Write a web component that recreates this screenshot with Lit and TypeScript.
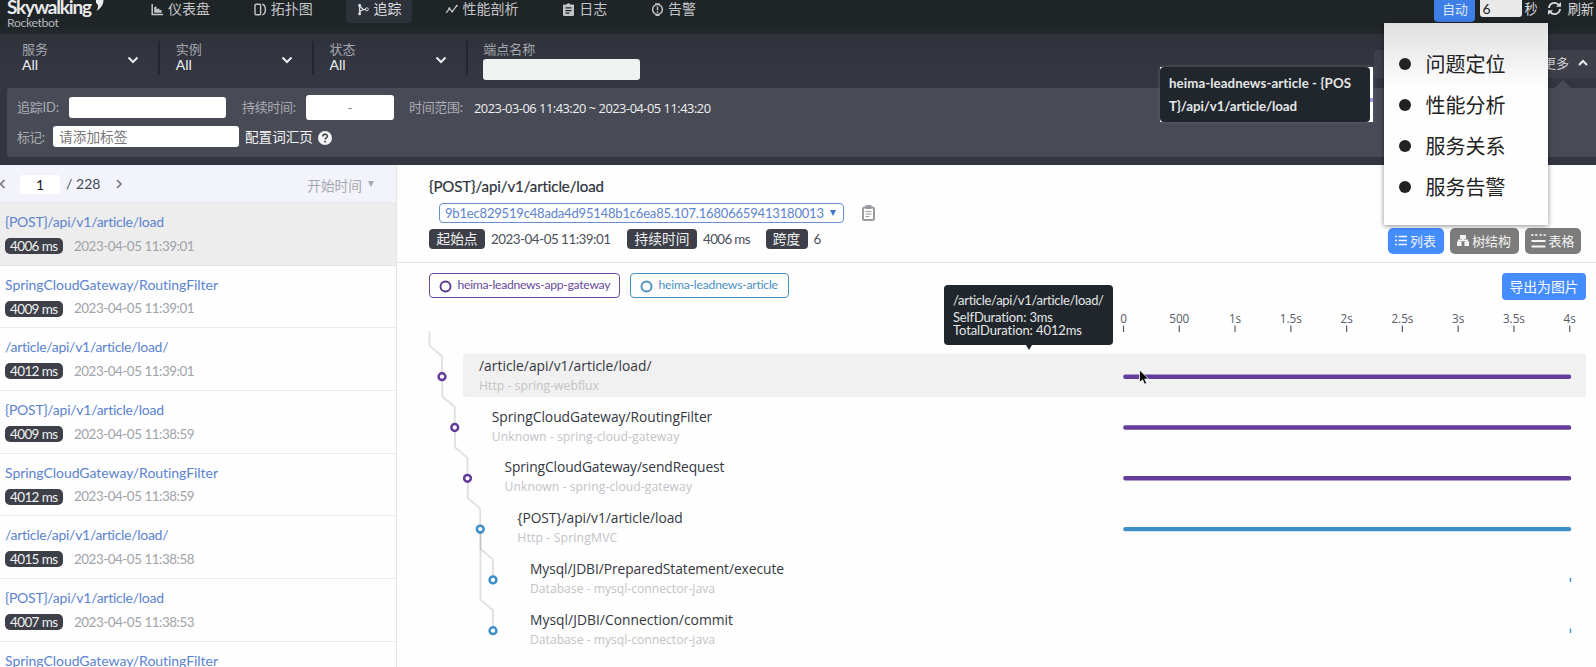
import { LitElement, html, svg, css } from "lit";
import { customElement, property } from "lit/decorators.js";

/** A single line of text that is tracked in or out so that it fills the given width. */
@customElement("fit-text")
class FitText extends LitElement {
  @property() text = "";
  @property({ type: Number }) width = 0;
  static styles = css`
    :host { display: inline-block; white-space: pre; font-variant-ligatures: none; flex: none; }
  `;
  render() {
    return html`<span>${this.text}</span>`;
  }
  updated() {
    const span = this.renderRoot.querySelector("span")!;
    span.style.letterSpacing = "0";
    const natural = span.getBoundingClientRect().width;
    span.style.letterSpacing = (this.width - natural) / Math.max(1, this.text.length - 1) + "px";
    this.style.width = this.width + "px";
  }
}

const fit = (text: string, width: number) => html`<fit-text .text=${text} .width=${width}></fit-text>`;

const navIcons = {
  dashboard: svg`<path d="M1.2 1v10.6H12" fill="none" stroke="currentColor" stroke-width="1.5"/><path d="M3.2 9.8V4.2l2.2-1 .3 3.3 2.2-1.2.9 2 1.8-.6v3.1z" fill="currentColor"/>`,
  topology: svg`<rect x="1" y="1.2" width="5.6" height="10.6" rx="1" fill="none" stroke="currentColor" stroke-width="1.4"/><path d="M8.2 1.2c2.600.5 3.200 2 3.200 5.300s-.6 4.800-3.200 5.300" fill="none" stroke="currentColor" stroke-width="1.4"/>`,
  trace: svg`<path d="M2.600 2.500v8M2.800 9.500c.6-3 3-3.200 6.200-3.200M3 3.500l3 2.500" fill="none" stroke="currentColor" stroke-width="1.300"/><circle cx="2.600" cy="2.200" r="1.500" fill="currentColor"/><circle cx="2.600" cy="10.800" r="1.500" fill="currentColor"/><circle cx="9.800" cy="6.300" r="1.500" fill="none" stroke="currentColor"/>`,
  profile: svg`<path d="M1.200 9.800l3.200-4.200 2.800 3 4.600-6" fill="none" stroke="currentColor" stroke-width="1.300"/><circle cx="4.400" cy="5.300" r="1" fill="currentColor"/><circle cx="7.300" cy="8.500" r="1" fill="currentColor"/><circle cx="11.800" cy="2.800" r="1" fill="currentColor"/>`,
  log: svg`<path fill-rule="evenodd" d="M2 1.500h2.700a1.900 1.900 0 0 1 3.600 0H11a1 1 0 0 1 1 1V12a1 1 0 0 1-1 1H2a1 1 0 0 1-1-1V2.500a1 1 0 0 1 1-1zM3.500 4.300v1.300h6V4.300zM3.500 6.900v1.300h6V6.900zM3.500 9.500v1.300h4V9.500z" fill="currentColor"/>`,
  alarm: svg`<circle cx="6.500" cy="6.500" r="4.900" fill="none" stroke="currentColor" stroke-width="1.400"/><path d="M6.500 3.500v3.700M6.500 8.300v1.400M4 1l5 0M4.500 12.200h4" stroke="currentColor" stroke-width="1.400" fill="none"/>`,
};
const nav = [
  { icon: navIcons.dashboard, label: "仪表盘" },
  { icon: navIcons.topology, label: "拓扑图" },
  { icon: navIcons.trace, label: "追踪", active: true },
  { icon: navIcons.profile, label: "性能剖析" },
  { icon: navIcons.log, label: "日志" },
  { icon: navIcons.alarm, label: "告警" },
];

const POST = "{POST}/api/v1/article/load";
const ROUTE = "SpringCloudGateway/RoutingFilter";
const ARTICLE = "/article/api/v1/article/load/";
const nameWidth: Record<string, number> = { [POST]: 159, [ROUTE]: 213, [ARTICLE]: 163.500 };
const traces = [
  [POST, "4006 ms", "2023-04-05 11:39:01"],
  [ROUTE, "4009 ms", "2023-04-05 11:39:01"],
  [ARTICLE, "4012 ms", "2023-04-05 11:39:01"],
  [POST, "4009 ms", "2023-04-05 11:38:59"],
  [ROUTE, "4012 ms", "2023-04-05 11:38:59"],
  [ARTICLE, "4015 ms", "2023-04-05 11:38:58"],
  [POST, "4007 ms", "2023-04-05 11:38:53"],
  [ROUTE, "4012 ms", "2023-04-05 11:38:53"],
];

const PURPLE = "#643c9c";
const BLUE = "#3f8fcb";
const spans = [
  { name: ARTICLE, w: 172.500, sub: "Http - spring-webflux", sw: 120, depth: 0, parent: -1, color: PURPLE, full: true },
  { name: ROUTE, w: 220.500, sub: "Unknown - spring-cloud-gateway", sw: 187.500, depth: 1, parent: 0, color: PURPLE, full: true },
  { name: "SpringCloudGateway/sendRequest", w: 220, sub: "Unknown - spring-cloud-gateway", sw: 187.500, depth: 2, parent: 1, color: PURPLE, full: true },
  { name: POST, w: 165.500, sub: "Http - SpringMVC", sw: 100, depth: 3, parent: 2, color: BLUE, full: true },
  { name: "Mysql/JDBI/PreparedStatement/execute", w: 254, sub: "Database - mysql-connector-java", sw: 185, depth: 4, parent: 3, color: BLUE, full: false },
  { name: "Mysql/JDBI/Connection/commit", w: 203, sub: "Database - mysql-connector-java", sw: 185, depth: 4, parent: 3, color: BLUE, full: false },
];
const axis = ["0", "500", "1s", "1.5s", "2s", "2.5s", "3s", "3.5s", "4s"];

@customElement("app-root")
class AppRoot extends LitElement {
  static styles = css`
    * { box-sizing: border-box; }
    :host {
      display: flex; flex-direction: column; position: relative; width: 1596px; height: 667px; overflow: hidden;
      background: #fefefe; font: 13px/18px Lato, "Noto Sans CJK SC", sans-serif; color: #4a505a;
    }
    svg { display: block; flex: none; }
    .header { height: 34px; flex: none; display: flex; background: linear-gradient(#1f2427 0 26px, #24282d 34px); color: #c3c5c8; }
    .brand { width: 140px; flex: none; padding-left: 7px; display: flex; flex-direction: column; }
    .logo { display: flex; height: 17px; gap: 2px; color: #e9eaec; }
    .logo fit-text { font-weight: 700; font-size: 19px; line-height: 24px; margin-top: -5px; }
    .bot { font-size: 12.300px; line-height: 14px; margin-top: -1px; color: #b2b5b9; }
    .nav { display: flex; gap: 22.800px; }
    .tab { display: flex; align-items: center; height: 23px; padding: 0 10px 5px 11px; gap: 4px; font-size: 14px; border-radius: 0 0 4px 4px; }
    .tab.on { background: #2d313a; color: #dadcdf; }
    .tools { margin-left: auto; padding-right: 2px; display: flex; align-items: flex-start; color: #d9dadc; font-size: 13.200px; line-height: 18px; }
    .auto { width: 41px; height: 22px; background: #3d7fe6; border-radius: 0 0 4px 4px; text-align: center; color: #dfe9f9; font-size: 12.800px; line-height: 19px; }
    .secs { width: 42px; height: 17px; margin: 0 2px 0 5px; background: #e9e9e9; border-radius: 0 0 3px 3px; padding-left: 2px; color: #222; line-height: 17px; font-size: 14px; }
    .sync { margin: 1px 6px 0 9px; }
    .filters { height: 54px; flex: none; display: flex; background: linear-gradient(#2f323b, #333640 30px); padding: 7px 0 0 22px; }
    .pick { width: 138.400px; height: 34px; margin-right: 15.400px; display: flex; justify-content: space-between; align-items: center; border-right: 2px solid #23262e; padding-right: 19px; }
    .pick > div { margin-top: -3px; }
    .pick > svg { margin-top: 3px; }
    .pick .k, .endpoint .k { color: #a4a7ae; font-size: 13px; line-height: 16px; }
    .pick .v { color: #eeeff1; font-size: 14px; line-height: 16px; }
    .endpoint .k { line-height: 17px; }
    .field { background: #fff; border-radius: 3px; height: 21px; }
    .endpoint .field { width: 157px; background: #f1f3f2; margin-top: 1px; }
    .more { margin-left: auto; margin-top: 9px; width: 222px; height: 28px; background: #3d4049; border-radius: 4px 0 0 4px; display: flex; align-items: center; justify-content: flex-end; gap: 8px; padding: 0 7px 2px 0; color: #cfd0d4; }
    .cond { height: 77px; flex: none; background: #333640; padding-left: 7px; }
    .box { height: 69px; background: #484b56; border-radius: 3px 0 0 3px; padding: 6px 0 0 10px; }
    .line { display: flex; align-items: center; color: #aaacb3; }
    .line1 { height: 26px; }
    .line2 { height: 21px; margin-top: 6px; }
    .id-field { width: 157px; margin: 0 16px 0 10px; }
    .dur-field { width: 88px; height: 25px; margin: 0 15px 0 10px; text-align: center; line-height: 27px; color: #888; }
    .tag-field { width: 186px; margin: 0 6px 0 8px; padding-left: 6px; line-height: 22px; font-size: 13.700px; color: #777; }
    .vocab { color: #f3f3f4; font-size: 13.600px; }
    .help { margin: 3px 0 0 5px; }
    .range { font: 12.800px/18px "Open Sans", sans-serif; color: #f0f0f1; margin-left: 11px; padding-top: 1px; }
    .body { flex: 1; min-height: 0; display: flex; }
    .side { width: 397px; flex: none; border-right: 1px solid #e4e5e9; overflow: hidden; }
    .pager { height: 38px; background: #f3f4fb; display: flex; align-items: center; border-bottom: 1px solid #e9eaee; color: #444b56; font-size: 14px; padding-top: 1px; }
    .page { width: 40px; height: 19px; background: #fff; border-radius: 3px; text-align: center; line-height: 20px; color: #222; margin: 0 6px 0 15px; }
    .next { margin-left: 15px; }
    .sort { margin-left: auto; color: #a6a9b0; font-size: 13.700px; display: flex; align-items: center; padding-right: 22px; gap: 6px; margin-top: 4px; }
    .tri { border: 3.500px solid transparent; border-top: 6px solid currentColor; border-bottom: 0; width: 0; margin-top: -4px; }
    .trace { height: 62.700px; border-bottom: 1.500px solid #ececee; padding: 10px 0 0 5px; }
    .trace.on { background: #ededed; border-bottom-color: #e4e4e4; }
    .name { font-size: 14px; line-height: 18px; height: 18px; color: #5b83cf; }
    .meta { display: flex; align-items: center; height: 18px; margin-top: 6px; gap: 11px; color: #a0a3a9; }
    .badge { width: 58px; height: 16px; border-radius: 5px; background: #3d4048; color: #f1f1f1; display: flex; align-items: center; justify-content: center; font-size: 13.500px; line-height: 16px; }
    .meta > fit-text { font-size: 13.400px; line-height: 17px; }
    .main { flex: 1; min-width: 0; display: flex; flex-direction: column; }
    .head { height: 98px; flex: none; border-bottom: 1.500px solid #e4e5e8; padding: 11px 16px 0 32px; }
    .title { font-size: 15px; line-height: 20px; height: 20px; color: #2d323b; -webkit-text-stroke: .2px currentColor; }
    .idrow { display: flex; align-items: center; gap: 18px; margin: 7px 0 0 10px; }
    .id { width: 405px; height: 19.500px; border: 1px solid #6a8fd0; border-radius: 4px; display: flex; align-items: center; padding: 0 5px; gap: 6px; color: #5b83cf; font-size: 13px; }
    .id .tri { margin-top: 0; color: #4474c4; }
    .facts { display: flex; align-items: center; height: 26px; margin-top: 3px; font-size: 13.400px; }
    .tag { height: 20px; background: #3d4048; border-radius: 4px; color: #f1f1f1; text-align: center; line-height: 20px; font-size: 13.700px; margin-right: 6px; }
    .tag.start { width: 56px; }
    .tag.dur { width: 70px; margin-left: 16px; }
    .tag.count { width: 42px; margin-left: 15px; }
    .views { margin-left: auto; display: flex; gap: 6px; padding-top: 4px; margin-right: -.5px; }
    .view { height: 26px; background: #7c7c7c; border-radius: 5px; color: #f4f4f4; display: flex; align-items: center; justify-content: center; gap: 3px; font-size: 12.900px; width: 56px; }
    .view.wide { width: 69px; }
    .view.on { background: #448dfe; }
    .legend { display: flex; height: 36px; flex: none; padding: 10px 10px 0 32px; gap: 10px; align-items: flex-start; }
    .svc { height: 24.500px; border: 1.300px solid; border-radius: 4px; display: flex; align-items: center; gap: 6px; padding-left: 8.500px; font-size: 12.200px; }
    .svc svg { margin-top: 3px; }
    .purple { color: #6a4a9c; width: 191px; }
    .blue { color: #4a90c2; width: 159px; }
    .export { margin-left: auto; width: 84px; height: 27px; background: #448dfe; border-radius: 4px; color: #fff; font-size: 13.800px; line-height: 27px; text-align: center; }
    .tree text { font-family: "Open Sans", "Noto Sans", sans-serif; font-variant-ligatures: none; }
    .t1 { font-size: 13.800px; fill: #33373f; }
    .t2 { font-size: 12.200px; fill: #c2c3c6; }
    .ax { font-size: 11.700px; fill: #555b66; text-anchor: middle; }
    .tip { position: absolute; background: #20262b; color: #e4e6e8; border-radius: 4px; }
    .tip1 { left: 1160px; top: 67px; width: 210px; height: 55px; padding: 5px 0 0 9px; font-weight: 700; font-size: 13.300px; line-height: 23.300px; display: flex; flex-direction: column; }
    .tipback { position: absolute; left: 1160px; top: 67px; width: 213px; height: 55px; background: linear-gradient(#fff 0 31px, #a99ad8 31px 35px, #fff 35px); box-shadow: 0 0 4px #5d6069; }
    .tip2 { left: 944px; top: 285px; width: 169px; height: 60px; padding: 7px 0 0 9px; font-size: 13px; line-height: 13px; display: flex; flex-direction: column; }
    .tip2 .path { line-height: 16px; margin-bottom: 3px; }
    .tip2::after { content: ""; position: absolute; left: 82px; top: 60px; border: 3px solid transparent; border-top: 5px solid #20262b; border-bottom: 0; }
    .menu { position: absolute; left: 1384px; top: 23px; width: 163.500px; height: 202px; background: linear-gradient(#e0e0e0, #fefefe 66px); box-shadow: 0 1px 5px rgba(0,0,0,.45); padding: 20.500px 0 0 15px; color: #222; font-size: 20px; }
    .entry { display: flex; align-items: center; gap: 14.500px; height: 40.900px; }
    .dot { width: 12px; height: 12px; border-radius: 50%; background: #222; }
    .notch { position: absolute; left: 1555px; top: 80px; border: 8px solid transparent; border-bottom: 8px solid #484b56; border-top: 0; }
    .cursor { position: absolute; left: 1138px; top: 369px; }
  `;

  private caret(up = false) {
    return html`<svg width="12" height="8" viewBox="0 0 12 8"><path d=${up ? "M2 6l4-4 4 4" : "M1.500 1.500L6 6l4.500-4.500"} fill="none" stroke="#eceded" stroke-width="2"/></svg>`;
  }

  private pick(label: string) {
    return html`<div class="pick"><div><div class="k">${label}</div><div class="v">All</div></div>${this.caret()}</div>`;
  }

  private span(s: (typeof spans)[number], i: number) {
    const y = 77.700 + i * 50.800;
    const x = 45 + s.depth * 12.750;
    const from = s.parent < 0 ? y - 45.500 : 77.700 + s.parent * 50.800 + 4;
    return svg`
      <path d="M${x - 12.500} ${from}V${y - 31}L${x} ${y - 20.500}V${y - 4}" fill="none" stroke="#000" stroke-opacity=".12" stroke-width="1.800"/>
      <circle cx=${x} cy=${y} r="3.400" fill="#fff" stroke=${s.color} stroke-width="2.500"/>
      <text class="t1" x=${x + 37} y=${y - 6} textLength=${s.w}>${s.name}</text>
      <text class="t2" x=${x + 37} y=${y + 13} textLength=${s.sw}>${s.sub}</text>
      <rect x=${s.full ? 726.200 : 1172.800} y=${y - 2.200} width=${s.full ? 448 : 1.400} height="4.400" rx=${s.full ? 2 : .5} fill=${s.color}/>`;
  }

  render() {
    return html`
      <div class="header">
        <div class="brand">
          <div class="logo">${fit("Skywalking", 85)}
            <svg width="10" height="12" viewBox="0 0 10 12"><path d="M2 0h7.500C9.500 5 6.500 8.500 2.500 11 4.500 7.500 5 4.500 2 3z" fill="currentColor"/></svg>
          </div>
          <div class="bot">${fit("Rocketbot", 52)}</div>
        </div>
        <div class="nav">
          ${nav.map((n) => html`<div class="tab ${n.active ? "on" : ""}"><svg width="13" height="13" viewBox="0 0 13 13">${n.icon}</svg>${n.label}</div>`)}
        </div>
        <div class="tools">
          <div class="auto">自动</div>
          <div class="secs">6</div>秒
          <svg class="sync" width="15" height="15" viewBox="0 0 15 15"><path d="M2 7a5.500 5.500 0 0 1 9.800-3M13 8a5.500 5.500 0 0 1-9.800 3" fill="none" stroke="currentColor" stroke-width="1.900"/><path d="M9 5.800h5V1zM6 9.200H1V14z" fill="currentColor"/></svg>
          <span>刷新</span>
        </div>
      </div>
      <div class="filters">
        ${this.pick("服务")}${this.pick("实例")}${this.pick("状态")}
        <div class="endpoint"><div class="k">端点名称</div><div class="field"></div></div>
        <div class="more">更多 ${this.caret(true)}</div>
      </div>
      <div class="cond">
        <div class="box">
          <div class="line line1">
            ${fit("追踪ID:", 42)}<div class="field id-field"></div>
            ${fit("持续时间:", 54)}<div class="field dur-field">-</div>
            ${fit("时间范围:", 54)}<span class="range">${fit("2023-03-06 11:43:20 ~ 2023-04-05 11:43:20", 237)}</span>
          </div>
          <div class="line line2">
            ${fit("标记:", 28)}<div class="field tag-field">请添加标签</div>
            <span class="vocab">配置词汇页</span>
            <svg class="help" width="14" height="14" viewBox="0 0 14 14"><circle cx="7" cy="7" r="7" fill="#f3f3f4"/><path d="M4.800 5.500c0-3 4.600-2.900 4.600-.2 0 1.600-2.300 1.600-2.300 3.300" fill="none" stroke="#333640" stroke-width="1.400"/><circle cx="7.100" cy="10.600" r=".95" fill="#333640"/></svg>
          </div>
        </div>
      </div>
      <div class="body">
        <div class="side">
          <div class="pager">
            <svg width="5" height="10" viewBox="0 0 5 10"><path d="M4.500 1L.5 5l4 4" fill="none" stroke="#777" stroke-width="1.700"/></svg>
            <div class="page">1</div>${fit("/ 228", 34.500)}
            <svg class="next" width="7" height="10" viewBox="0 0 7 10"><path d="M1 1l4 4-4 4" fill="none" stroke="#777" stroke-width="1.700"/></svg>
            <div class="sort">开始时间<span class="tri"></span></div>
          </div>
          ${traces.map(([name, ms, at], i) => html`
            <div class="trace ${i === 0 ? "on" : ""}">
              <div class="name">${fit(name, nameWidth[name])}</div>
              <div class="meta"><span class="badge">${fit(ms, 48)}</span>${fit(at, 120.500)}</div>
            </div>`)}
        </div>
        <div class="main">
          <div class="head">
            <div class="title">${fit(POST, 175)}</div>
            <div class="idrow">
              <div class="id">${fit("9b1ec829519c48ada4d95148b1c6ea85.107.16806659413180013", 379)}<span class="tri"></span></div>
              <svg width="13" height="16" viewBox="0 0 13 16"><rect x="1" y="2.500" width="11" height="12.500" rx="1.500" fill="none" stroke="#999ba0" stroke-width="2"/><rect x="3.500" y="0" width="6" height="4" rx="1" fill="#999ba0"/><path d="M3.500 6.500h6M3.500 9h6M3.500 11.500h4" stroke="#999ba0" stroke-width="1.100"/></svg>
            </div>
            <div class="facts">
              <span class="tag start">起始点</span>${fit("2023-04-05 11:39:01", 120)}
              <span class="tag dur">持续时间</span>${fit("4006 ms", 47.500)}
              <span class="tag count">跨度</span>6
              <div class="views">
                <div class="view on"><svg width="12" height="11" viewBox="0 0 12 11"><path d="M0 1.500h2M0 5.500h2M0 9.500h2M3.500 1.500H12M3.500 5.500H12M3.500 9.500H12" stroke="currentColor" stroke-width="1.500"/></svg>列表</div>
                <div class="view wide"><svg width="12" height="11" viewBox="0 0 12 11"><path d="M3 0h6v4H3zM0 6.500h4.500V11H0zM7.500 6.500H12V11H7.500z" fill="currentColor"/><path d="M2 7V5.300h8V7M6 3v2.500" fill="none" stroke="currentColor" stroke-width="1.800"/></svg>树结构</div>
                <div class="view"><svg width="15" height="14" viewBox="0 0 15 14"><path d="M0 1h2.500M4 1h2.500M8.500 1H11M12.500 1H15" stroke="currentColor" stroke-width="1.600"/><path d="M.5 7h14M.5 12.500h14" stroke="currentColor" stroke-width="2"/></svg>表格</div>
              </div>
            </div>
          </div>
          <div class="legend">
            <div class="svc purple"><svg width="13" height="13" viewBox="0 0 13 13"><circle cx="6.500" cy="6.500" r="5" fill="none" stroke="#5b3a8e" stroke-width="1.900"/></svg>${fit("heima-leadnews-app-gateway", 153)}</div>
            <div class="svc blue"><svg width="13" height="13" viewBox="0 0 13 13"><circle cx="6.500" cy="6.500" r="5" fill="none" stroke="currentColor" stroke-width="1.900"/></svg>${fit("heima-leadnews-article", 119.500)}</div>
            <div class="export">导出为图片</div>
          </div>
          <svg class="tree" width="1199" height="368" viewBox="0 0 1199 368">
            <rect x="66" y="54.500" width="1123" height="43.500" rx="2" fill="#f1f1f1"/>
            ${axis.map((a, i) => svg`<text class="ax" x=${726.500 + i * 55.780} y="23.500">${a}</text><path d="M${726.500 + i * 55.780} 26.500v6.500" stroke="#555b66" stroke-width="1.200"/>`)}
            ${spans.map((s, i) => this.span(s, i))}
          </svg>
        </div>
      </div>
      <div class="notch"></div>
      <div class="tipback"></div>
      <div class="tip tip1">${fit("heima-leadnews-article - {POS", 182)}${fit("T}/api/v1/article/load", 128)}</div>
      <div class="tip tip2"><span class="path">${fit(ARTICLE, 151)}</span>${fit("SelfDuration: 3ms", 100)}${fit("TotalDuration: 4012ms", 129)}</div>
      <svg class="cursor" width="12" height="17" viewBox="0 0 12 17"><path d="M1.500 1v12.500l3-2.800 2 4.500 2.200-1-2-4.200h4z" fill="#000" stroke="#fff" stroke-width=".8"/></svg>
      <div class="menu">
        ${["问题定位", "性能分析", "服务关系", "服务告警"].map((m) => html`<div class="entry"><span class="dot"></span>${m}</div>`)}
      </div>
    `;
  }
}
